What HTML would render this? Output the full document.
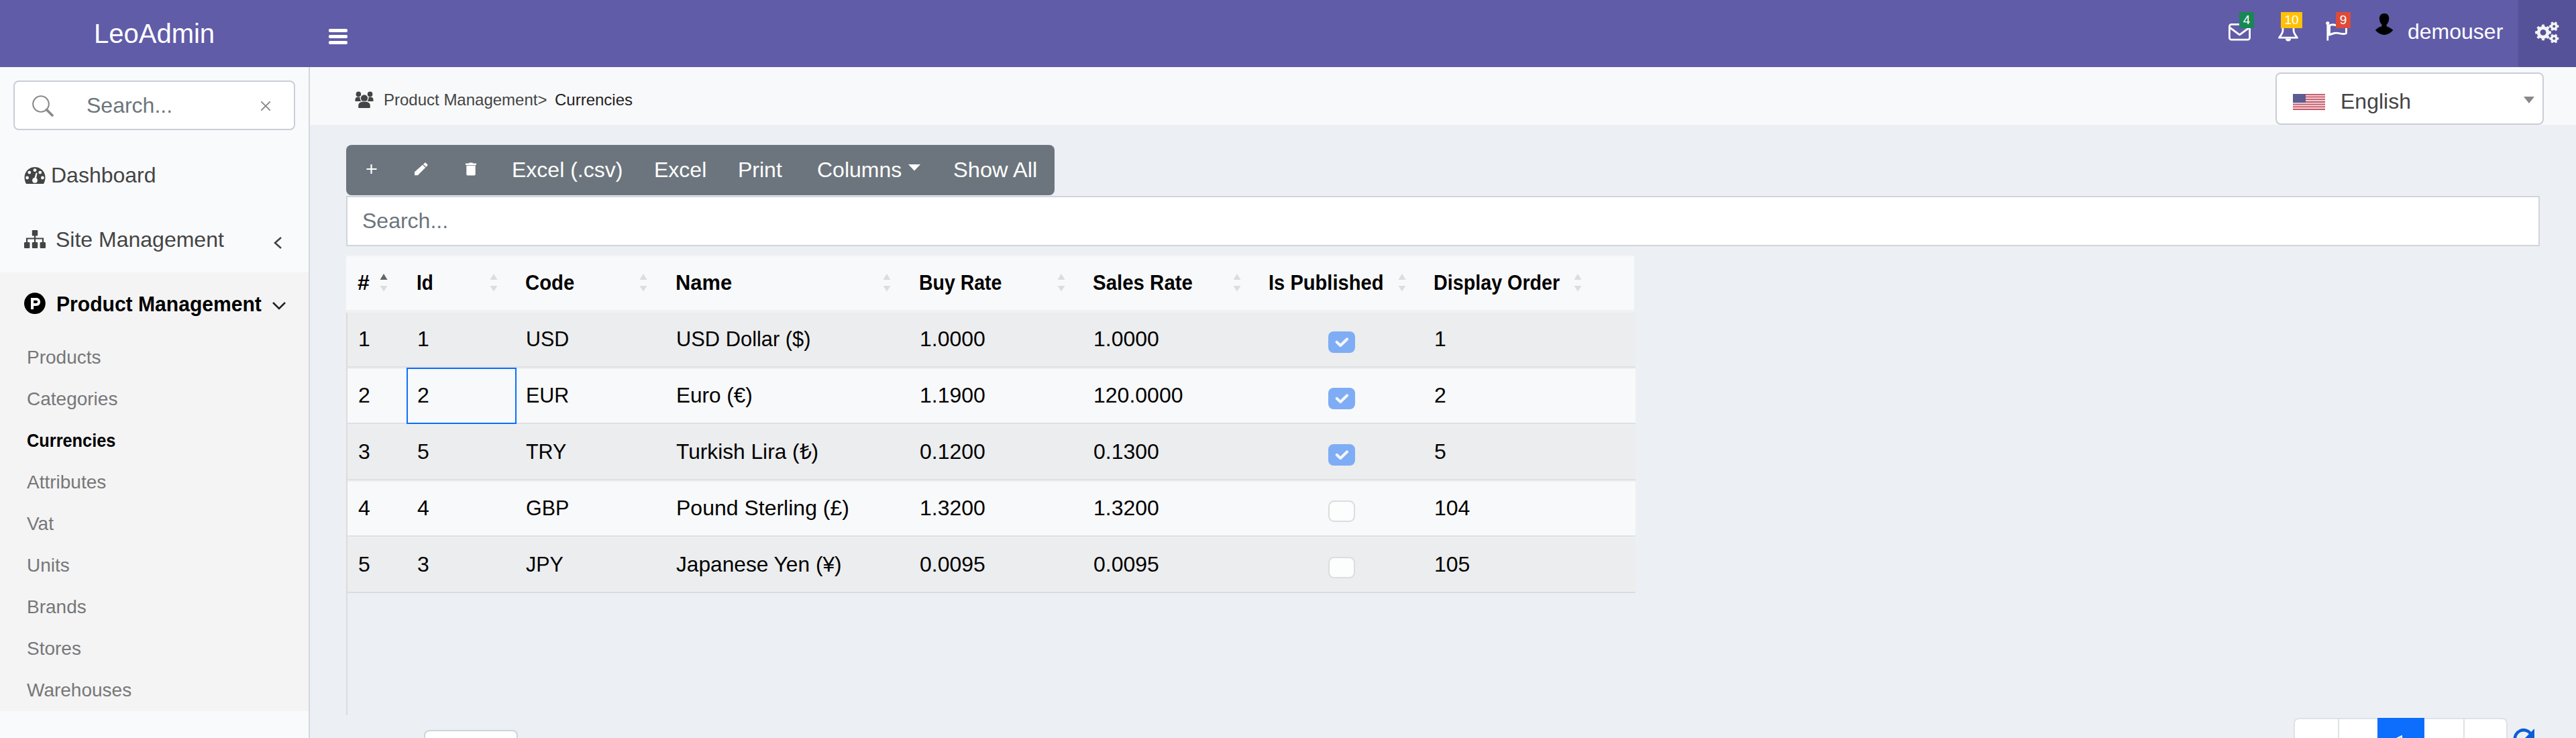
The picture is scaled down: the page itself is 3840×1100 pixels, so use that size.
<!DOCTYPE html>
<html><head><meta charset="utf-8"><title>LeoAdmin - Currencies</title>
<style>
html,body{margin:0;padding:0;width:3840px;height:1100px;overflow:hidden;background:#ecf0f5}
body{position:relative;font-family:"Liberation Sans",sans-serif}
.t{position:absolute;white-space:nowrap;line-height:1;}
.badge{position:absolute;height:24px;color:#fff;font-size:19px;line-height:24px;text-align:center;font-family:"Liberation Sans",sans-serif}
svg{display:block}
</style></head><body>
<div style="position:absolute;left:0;top:0;width:3840px;height:100px;background:#605ca8"></div>
<div style="position:absolute;left:3754px;top:0;width:86px;height:100px;background:#555299"></div>
<div class="t" style="left:140px;top:30.43px;font-size:40px;color:#fff;font-weight:400;">LeoAdmin</div>
<svg style="position:absolute;left:489px;top:42px" width="30" height="26" viewBox="0 0 30 26"><rect x="1" y="1" width="28" height="5" rx="2" fill="#fff"/><rect x="1" y="10" width="28" height="5" rx="2" fill="#fff"/><rect x="1" y="19" width="28" height="5" rx="2" fill="#fff"/></svg>
<svg style="position:absolute;left:3320px;top:33px" width="38" height="30" viewBox="0 0 38 30"><rect x="3.4" y="3.4" width="30.2" height="22.8" rx="3" fill="none" stroke="#fff" stroke-width="2.8"/><path d="M4.5 8.5 L18.5 18.8 L32.5 8.5" fill="none" stroke="#fff" stroke-width="2.8" stroke-linejoin="round"/></svg>
<div class="badge" style="left:3338px;top:18px;width:22px;background:#198754">4</div>
<svg style="position:absolute;left:3393px;top:28px" width="36" height="36" viewBox="0 0 36 36"><path d="M18 3 C11.5 3 10 9 10 14 L10 17 C10 21.5 7 24.5 4.5 28.2 L31.5 28.2 C29 24.5 26 21.5 26 17 L26 14 C26 9 24.5 3 18 3 Z" fill="none" stroke="#fff" stroke-width="2.8" stroke-linejoin="round"/><path d="M14 29.5 a4 4 0 0 0 8 0" fill="#fff"/></svg>
<div class="badge" style="left:3400px;top:18px;width:32px;background:#ffc107">10</div>
<svg style="position:absolute;left:3464px;top:30px" width="38" height="34" viewBox="0 0 38 34"><circle cx="5.8" cy="4.5" r="2.6" fill="#fff"/><line x1="5.8" y1="4.5" x2="5.8" y2="30.5" stroke="#fff" stroke-width="2.8"/><path d="M8.5 8 C14 4 20 10 26 8 C29.5 7 32 6 33.5 5.5 L33.5 19.5 C28 23 21.5 17.5 15.5 19.5 C12 20.5 10.5 21 8.5 22 Z" fill="none" stroke="#fff" stroke-width="2.9" stroke-linejoin="round"/></svg>
<div class="badge" style="left:3482px;top:18px;width:22px;background:#dd4b39">9</div>
<svg style="position:absolute;left:3540px;top:19px" width="28" height="34" viewBox="0 0 28 34"><path d="M14.1 0.9 C18.6 0.9 21.3 4 21.3 8.6 C21.3 12.6 19.6 16 17.6 17.8 L17.8 21.5 L10.4 21.5 L10.6 17.8 C8.6 16 6.9 12.6 6.9 8.6 C6.9 4 9.6 0.9 14.1 0.9 Z" fill="#000"/><path d="M0.8 26 C5 22 9.5 19.8 14.1 19.8 C18.7 19.8 23.2 22 27.4 26 C23 30.6 18.5 32.9 14.1 32.9 C9.7 32.9 5.2 30.6 0.8 26 Z" fill="#000"/></svg>
<div class="t" style="left:3589px;top:30.91px;font-size:32px;color:#fff;font-weight:400;">demouser</div>
<svg style="position:absolute;left:3776px;top:30px" width="44" height="38" viewBox="0 0 44 38"><polygon points="23.80,16.51 26.50,16.86 26.50,19.94 23.80,20.29 22.56,23.28 24.22,25.44 22.04,27.62 19.88,25.96 16.89,27.20 16.54,29.90 13.46,29.90 13.11,27.20 10.12,25.96 7.96,27.62 5.78,25.44 7.44,23.28 6.20,20.29 3.50,19.94 3.50,16.86 6.20,16.51 7.44,13.52 5.78,11.36 7.96,9.18 10.12,10.84 13.11,9.60 13.46,6.90 16.54,6.90 16.89,9.60 19.88,10.84 22.04,9.18 24.22,11.36 22.56,13.52" fill="#f4f4f4" stroke="#f4f4f4" stroke-width="0.8" stroke-linejoin="round"/><circle cx="15" cy="18.4" r="4.4" fill="#555299"/><polygon points="36.19,7.75 37.99,7.98 37.99,10.42 36.19,10.65 34.95,12.80 35.65,14.47 33.54,15.69 32.44,14.25 29.96,14.25 28.86,15.69 26.75,14.47 27.45,12.80 26.21,10.65 24.41,10.42 24.41,7.98 26.21,7.75 27.45,5.60 26.75,3.93 28.86,2.71 29.96,4.15 32.44,4.15 33.54,2.71 35.65,3.93 34.95,5.60" fill="#f4f4f4" stroke="#f4f4f4" stroke-width="0.8" stroke-linejoin="round"/><circle cx="31.2" cy="9.2" r="2.0" fill="#555299"/><polygon points="36.19,26.05 37.99,26.28 37.99,28.72 36.19,28.95 34.95,31.10 35.65,32.77 33.54,33.99 32.44,32.55 29.96,32.55 28.86,33.99 26.75,32.77 27.45,31.10 26.21,28.95 24.41,28.72 24.41,26.28 26.21,26.05 27.45,23.90 26.75,22.23 28.86,21.01 29.96,22.45 32.44,22.45 33.54,21.01 35.65,22.23 34.95,23.90" fill="#f4f4f4" stroke="#f4f4f4" stroke-width="0.8" stroke-linejoin="round"/><circle cx="31.2" cy="27.5" r="2.0" fill="#555299"/></svg>
<div style="position:absolute;left:0;top:100px;width:460px;height:1000px;background:#f9fafc"></div>
<div style="position:absolute;left:0;top:406px;width:460px;height:654px;background:#f4f4f5"></div>
<div style="position:absolute;left:460px;top:100px;width:2px;height:1000px;background:#d2d6de"></div>
<div style="position:absolute;left:20px;top:120px;width:416px;height:70px;border:2px solid #c9ced6;border-radius:8px;background:#fff"></div>
<svg style="position:absolute;left:46px;top:140px" width="36" height="36" viewBox="0 0 36 36"><circle cx="15" cy="15" r="11.8" fill="none" stroke="#8a8a8a" stroke-width="2.1"/><line x1="23.5" y1="23.5" x2="32" y2="32" stroke="#8a8a8a" stroke-width="3.8" stroke-linecap="round"/></svg>
<div class="t" style="left:129px;top:140.71px;font-size:32px;color:#6c757d;font-weight:400;">Search...</div>
<svg style="position:absolute;left:387px;top:149px" width="18" height="18" viewBox="0 0 18 18"><path d="M2.3 2.3 L15.7 15.7 M15.7 2.3 L2.3 15.7" stroke="#888" stroke-width="1.9"/></svg>
<svg style="position:absolute;left:36px;top:248px" width="32" height="27" viewBox="0 0 32 27"><path d="M16 1 C7.4 1 0.5 7.9 0.5 16.5 C0.5 20 1.5 23.2 3 26 L29 26 C30.5 23.2 31.5 20 31.5 16.5 C31.5 7.9 24.6 1 16 1 Z" fill="#444"/><circle cx="16" cy="5.6" r="2.4" fill="#f9fafc"/><circle cx="7.8" cy="9.1" r="2.4" fill="#f9fafc"/><circle cx="23.8" cy="9.1" r="2.4" fill="#f9fafc"/><circle cx="4.6" cy="17" r="2.4" fill="#f9fafc"/><circle cx="27.4" cy="17" r="2.4" fill="#f9fafc"/><circle cx="16" cy="20.8" r="3.9" fill="#f9fafc"/><path d="M14.6 20 L17.6 9.6 L19.6 10.1 L17.6 20.5 Z" fill="#f9fafc"/></svg>
<div class="t" style="left:76px;top:244.91px;font-size:32px;color:#444;font-weight:400;">Dashboard</div>
<svg style="position:absolute;left:36px;top:342px" width="32" height="29" viewBox="0 0 32 29"><rect x="11.8" y="1" width="8.4" height="8.6" rx="1.2" fill="#444"/><path d="M16 9 V13.5 M4 19 V13.5 H28 V19 M16 13.5 V19" stroke="#444" stroke-width="2.2" fill="none"/><rect x="0" y="19" width="8.4" height="9" rx="1.2" fill="#444"/><rect x="11.8" y="19" width="8.4" height="9" rx="1.2" fill="#444"/><rect x="23.6" y="19" width="8.4" height="9" rx="1.2" fill="#444"/></svg>
<div class="t" style="left:83px;top:340.91px;font-size:32px;color:#444;font-weight:400;">Site Management</div>
<svg style="position:absolute;left:406px;top:352px" width="16" height="20" viewBox="0 0 16 20"><path d="M13 2 L4 10 L13 18" fill="none" stroke="#444" stroke-width="2.6"/></svg>
<svg style="position:absolute;left:36px;top:436px" width="33" height="33" viewBox="0 0 33 33"><circle cx="15.9" cy="16.2" r="15.9" fill="#000"/><path d="M10 7.9 H18 C21.8 7.9 24 10.4 24 14 C24 17.6 21.8 19.9 18 19.9 H14.1 V25 H10 Z M14.1 11.7 V16 H17.8 C19.3 16 20.2 15.2 20.2 13.85 C20.2 12.5 19.3 11.7 17.8 11.7 Z" fill="#fff"/></svg>
<div class="t" style="left:84px;top:436.91px;font-size:32px;color:#000;font-weight:700;transform:scaleX(0.94);transform-origin:0 0;">Product Management</div>
<svg style="position:absolute;left:405px;top:448px" width="22" height="16" viewBox="0 0 22 16"><path d="M2 3 L11 12 L20 3" fill="none" stroke="#222" stroke-width="2.6"/></svg>
<div class="t" style="left:40px;top:518.79px;font-size:28px;color:#777;font-weight:400;">Products</div>
<div class="t" style="left:40px;top:580.79px;font-size:28px;color:#777;font-weight:400;">Categories</div>
<div class="t" style="left:40px;top:642.79px;font-size:28px;color:#000;font-weight:700;transform:scaleX(0.905);transform-origin:0 0;">Currencies</div>
<div class="t" style="left:40px;top:704.79px;font-size:28px;color:#777;font-weight:400;">Attributes</div>
<div class="t" style="left:40px;top:766.79px;font-size:28px;color:#777;font-weight:400;">Vat</div>
<div class="t" style="left:40px;top:828.79px;font-size:28px;color:#777;font-weight:400;">Units</div>
<div class="t" style="left:40px;top:890.79px;font-size:28px;color:#777;font-weight:400;">Brands</div>
<div class="t" style="left:40px;top:952.79px;font-size:28px;color:#777;font-weight:400;">Stores</div>
<div class="t" style="left:40px;top:1014.79px;font-size:28px;color:#777;font-weight:400;">Warehouses</div>
<div style="position:absolute;left:462px;top:100px;width:3378px;height:1000px;background:#ecf0f5"></div>
<div style="position:absolute;left:462px;top:100px;width:3378px;height:86px;background:#f8f9fa"></div>
<svg style="position:absolute;left:529px;top:136px" width="28" height="26" viewBox="0 0 28 26"><circle cx="5.4" cy="4.4" r="3.8" fill="#444"/><circle cx="22.6" cy="4.4" r="3.8" fill="#444"/><path d="M0.5 15 V12.5 C0.5 9.8 2.3 8.6 5 8.6 C7.7 8.6 9.5 9.8 9.5 12.5 V15 Z" fill="#444"/><path d="M18.5 15 V12.5 C18.5 9.8 20.3 8.6 23 8.6 C25.7 8.6 27.5 9.8 27.5 12.5 V15 Z" fill="#444"/><circle cx="14" cy="10.3" r="5.8" fill="#444" stroke="#f8f9fa" stroke-width="1.3"/><path d="M4.6 24 V21.5 C4.6 17.3 8.2 15 14 15 C19.8 15 23.4 17.3 23.4 21.5 V24 Q23.4 25.5 21.9 25.5 H6.1 Q4.6 25.5 4.6 24 Z" fill="#444" stroke="#f8f9fa" stroke-width="1.2"/></svg>
<div class="t" style="left:572px;top:137.28px;font-size:24px;color:#444;font-weight:400;">Product Management&gt;</div>
<div class="t" style="left:827px;top:137.28px;font-size:24px;color:#222;font-weight:400;">Currencies</div>
<div style="position:absolute;left:3392px;top:108px;width:396px;height:74px;border:2px solid #c9ced6;border-radius:8px;background:#fff"></div>
<svg style="position:absolute;left:3418px;top:140px" width="48" height="24" viewBox="0 0 48 24"><rect x="0" y="0.000" width="48" height="1.846" fill="#c54b5c"/><rect x="0" y="1.846" width="48" height="1.846" fill="#ecd3d8"/><rect x="0" y="3.692" width="48" height="1.846" fill="#c54b5c"/><rect x="0" y="5.538" width="48" height="1.846" fill="#ecd3d8"/><rect x="0" y="7.385" width="48" height="1.846" fill="#c54b5c"/><rect x="0" y="9.231" width="48" height="1.846" fill="#ecd3d8"/><rect x="0" y="11.077" width="48" height="1.846" fill="#c54b5c"/><rect x="0" y="12.923" width="48" height="1.846" fill="#ecd3d8"/><rect x="0" y="14.769" width="48" height="1.846" fill="#c54b5c"/><rect x="0" y="16.615" width="48" height="1.846" fill="#ecd3d8"/><rect x="0" y="18.462" width="48" height="1.846" fill="#c54b5c"/><rect x="0" y="20.308" width="48" height="1.846" fill="#ecd3d8"/><rect x="0" y="22.154" width="48" height="1.846" fill="#c54b5c"/><rect x="0" y="0" width="19" height="13" fill="#5b5c8f"/></svg>
<div class="t" style="left:3489px;top:134.91px;font-size:32px;color:#444;font-weight:400;">English</div>
<svg style="position:absolute;left:3762px;top:144px" width="16" height="10" viewBox="0 0 16 10"><path d="M0 0 H16 L8 10 Z" fill="#888"/></svg>
<div style="position:absolute;left:516px;top:216px;width:1056px;height:75px;background:#6c757d;border-radius:8px"></div>
<svg style="position:absolute;left:546px;top:244px" width="16" height="16" viewBox="0 0 16 16"><path d="M7.5 1 V15 M0.5 8 H15.5" stroke="#fff" stroke-width="2.2"/></svg>
<svg style="position:absolute;left:617px;top:242px" width="21" height="20" viewBox="0 0 21 20"><path d="M16 1 C16.6 0.4 17.4 0.4 18 1 L20 3 C20.6 3.6 20.6 4.4 20 5 L7 18 L6 19.3 H1 V14.3 Z" fill="#fff"/><path d="M13.5 3.2 L17.8 7.5" stroke="#6c757d" stroke-width="1.3"/></svg>
<svg style="position:absolute;left:694px;top:242px" width="16" height="20" viewBox="0 0 16 20"><path d="M0 1.6 H5 L5.6 0.6 H10.4 L11 1.6 H16 V4 H0 Z" fill="#fff"/><path d="M1.3 4.8 H14.7 V17.8 C14.7 18.8 14 19.4 13 19.4 H3 C2 19.4 1.3 18.8 1.3 17.8 Z" fill="#fff"/></svg>
<div class="t" style="left:763px;top:237.11px;font-size:32px;color:#fff;font-weight:400;">Excel (.csv)</div>
<div class="t" style="left:975px;top:237.11px;font-size:32px;color:#fff;font-weight:400;">Excel</div>
<div class="t" style="left:1100px;top:237.11px;font-size:32px;color:#fff;font-weight:400;">Print</div>
<div class="t" style="left:1218px;top:237.11px;font-size:32px;color:#fff;font-weight:400;">Columns</div>
<svg style="position:absolute;left:1354px;top:245px" width="18" height="10" viewBox="0 0 18 10"><path d="M0 0 H18 L9 9.5 Z" fill="#fff"/></svg>
<div class="t" style="left:1421px;top:237.11px;font-size:32px;color:#fff;font-weight:400;transform:scaleX(1.02);transform-origin:0 0;">Show All</div>
<div style="position:absolute;left:516px;top:292px;width:3266px;height:71px;border:2px solid #d0d4db;background:#fff"></div>
<div class="t" style="left:540px;top:313.21px;font-size:32px;color:#6c757d;font-weight:400;">Search...</div>
<div style="position:absolute;left:516px;top:380px;width:1920px;height:86px;background:#f8f9fa"></div>
<div style="position:absolute;left:516px;top:380px;width:1920px;height:2px;background:#f1f2f3"></div>
<div style="position:absolute;left:516px;top:462px;width:1920px;height:4px;background:#f1f1f1"></div>
<div class="t" style="left:533px;top:405.41px;font-size:32px;color:#000;font-weight:700;transform:scaleX(1.0);transform-origin:0 0;">#</div>
<svg style="position:absolute;left:566px;top:407px" width="12" height="28" viewBox="0 0 12 28"><path d="M0.5 10 L6 1 L11.5 10 Z" fill="#666"/><path d="M0.5 19 L11.5 19 L6 27.5 Z" fill="#ddd"/></svg>
<div class="t" style="left:621px;top:405.41px;font-size:32px;color:#000;font-weight:700;transform:scaleX(0.87);transform-origin:0 0;">Id</div>
<svg style="position:absolute;left:730px;top:407px" width="12" height="28" viewBox="0 0 12 28"><path d="M0.5 10 L6 1 L11.5 10 Z" fill="#ddd"/><path d="M0.5 19 L11.5 19 L6 27.5 Z" fill="#ddd"/></svg>
<div class="t" style="left:783px;top:405.41px;font-size:32px;color:#000;font-weight:700;transform:scaleX(0.915);transform-origin:0 0;">Code</div>
<svg style="position:absolute;left:953px;top:407px" width="12" height="28" viewBox="0 0 12 28"><path d="M0.5 10 L6 1 L11.5 10 Z" fill="#ddd"/><path d="M0.5 19 L11.5 19 L6 27.5 Z" fill="#ddd"/></svg>
<div class="t" style="left:1007px;top:405.41px;font-size:32px;color:#000;font-weight:700;transform:scaleX(0.965);transform-origin:0 0;">Name</div>
<svg style="position:absolute;left:1316px;top:407px" width="12" height="28" viewBox="0 0 12 28"><path d="M0.5 10 L6 1 L11.5 10 Z" fill="#ddd"/><path d="M0.5 19 L11.5 19 L6 27.5 Z" fill="#ddd"/></svg>
<div class="t" style="left:1370px;top:405.41px;font-size:32px;color:#000;font-weight:700;transform:scaleX(0.89);transform-origin:0 0;">Buy Rate</div>
<svg style="position:absolute;left:1576px;top:407px" width="12" height="28" viewBox="0 0 12 28"><path d="M0.5 10 L6 1 L11.5 10 Z" fill="#ddd"/><path d="M0.5 19 L11.5 19 L6 27.5 Z" fill="#ddd"/></svg>
<div class="t" style="left:1629px;top:405.41px;font-size:32px;color:#000;font-weight:700;transform:scaleX(0.92);transform-origin:0 0;">Sales Rate</div>
<svg style="position:absolute;left:1838px;top:407px" width="12" height="28" viewBox="0 0 12 28"><path d="M0.5 10 L6 1 L11.5 10 Z" fill="#ddd"/><path d="M0.5 19 L11.5 19 L6 27.5 Z" fill="#ddd"/></svg>
<div class="t" style="left:1891px;top:405.41px;font-size:32px;color:#000;font-weight:700;transform:scaleX(0.91);transform-origin:0 0;">Is Published</div>
<svg style="position:absolute;left:2084px;top:407px" width="12" height="28" viewBox="0 0 12 28"><path d="M0.5 10 L6 1 L11.5 10 Z" fill="#ddd"/><path d="M0.5 19 L11.5 19 L6 27.5 Z" fill="#ddd"/></svg>
<div class="t" style="left:2137px;top:405.41px;font-size:32px;color:#000;font-weight:700;transform:scaleX(0.897);transform-origin:0 0;">Display Order</div>
<svg style="position:absolute;left:2346px;top:407px" width="12" height="28" viewBox="0 0 12 28"><path d="M0.5 10 L6 1 L11.5 10 Z" fill="#ddd"/><path d="M0.5 19 L11.5 19 L6 27.5 Z" fill="#ddd"/></svg>
<div style="position:absolute;left:516px;top:466px;width:2px;height:600px;background:#dcdcdc"></div>
<div style="position:absolute;left:518px;top:466px;width:1920px;height:80px;background:#ecedee"></div>
<div style="position:absolute;left:518px;top:546px;width:1920px;height:2px;background:#dfe0e1"></div>
<div class="t" style="left:534px;top:488.51px;font-size:32px;color:#000;font-weight:400;">1</div>
<div class="t" style="left:622px;top:488.51px;font-size:32px;color:#000;font-weight:400;">1</div>
<div class="t" style="left:784px;top:488.51px;font-size:32px;color:#000;font-weight:400;transform:scaleX(0.95);transform-origin:0 0;">USD</div>
<div class="t" style="left:1008px;top:488.51px;font-size:32px;color:#000;font-weight:400;transform:scaleX(0.964);transform-origin:0 0;">USD Dollar ($)</div>
<div class="t" style="left:1371px;top:488.51px;font-size:32px;color:#000;font-weight:400;">1.0000</div>
<div class="t" style="left:1630px;top:488.51px;font-size:32px;color:#000;font-weight:400;">1.0000</div>
<svg style="position:absolute;left:1980px;top:494px" width="40" height="32" viewBox="0 0 40 32"><rect x="0" y="0" width="40" height="32" rx="8" fill="#7fadf5"/><path d="M12.8 16 L18.2 21 L28 11.5" fill="none" stroke="#f4f6f8" stroke-width="4.2" stroke-linecap="round" stroke-linejoin="round"/></svg>
<div class="t" style="left:2138px;top:488.51px;font-size:32px;color:#000;font-weight:400;">1</div>
<div style="position:absolute;left:518px;top:550px;width:1920px;height:80px;background:#f8f9fa"></div>
<div style="position:absolute;left:518px;top:630px;width:1920px;height:2px;background:#dfe0e1"></div>
<div class="t" style="left:534px;top:572.51px;font-size:32px;color:#000;font-weight:400;">2</div>
<div class="t" style="left:622px;top:572.51px;font-size:32px;color:#000;font-weight:400;">2</div>
<div class="t" style="left:784px;top:572.51px;font-size:32px;color:#000;font-weight:400;transform:scaleX(0.95);transform-origin:0 0;">EUR</div>
<div class="t" style="left:1008px;top:572.51px;font-size:32px;color:#000;font-weight:400;transform:scaleX(0.985);transform-origin:0 0;">Euro (€)</div>
<div class="t" style="left:1371px;top:572.51px;font-size:32px;color:#000;font-weight:400;">1.1900</div>
<div class="t" style="left:1630px;top:572.51px;font-size:32px;color:#000;font-weight:400;">120.0000</div>
<svg style="position:absolute;left:1980px;top:578px" width="40" height="32" viewBox="0 0 40 32"><rect x="0" y="0" width="40" height="32" rx="8" fill="#7fadf5"/><path d="M12.8 16 L18.2 21 L28 11.5" fill="none" stroke="#f4f6f8" stroke-width="4.2" stroke-linecap="round" stroke-linejoin="round"/></svg>
<div class="t" style="left:2138px;top:572.51px;font-size:32px;color:#000;font-weight:400;">2</div>
<div style="position:absolute;left:518px;top:634px;width:1920px;height:80px;background:#ecedee"></div>
<div style="position:absolute;left:518px;top:714px;width:1920px;height:2px;background:#dfe0e1"></div>
<div class="t" style="left:534px;top:656.51px;font-size:32px;color:#000;font-weight:400;">3</div>
<div class="t" style="left:622px;top:656.51px;font-size:32px;color:#000;font-weight:400;">5</div>
<div class="t" style="left:784px;top:656.51px;font-size:32px;color:#000;font-weight:400;transform:scaleX(0.95);transform-origin:0 0;">TRY</div>
<div class="t" style="left:1008px;top:656.51px;font-size:32px;color:#000;font-weight:400;transform:scaleX(0.99);transform-origin:0 0;">Turkish Lira (₺)</div>
<div class="t" style="left:1371px;top:656.51px;font-size:32px;color:#000;font-weight:400;">0.1200</div>
<div class="t" style="left:1630px;top:656.51px;font-size:32px;color:#000;font-weight:400;">0.1300</div>
<svg style="position:absolute;left:1980px;top:662px" width="40" height="32" viewBox="0 0 40 32"><rect x="0" y="0" width="40" height="32" rx="8" fill="#7fadf5"/><path d="M12.8 16 L18.2 21 L28 11.5" fill="none" stroke="#f4f6f8" stroke-width="4.2" stroke-linecap="round" stroke-linejoin="round"/></svg>
<div class="t" style="left:2138px;top:656.51px;font-size:32px;color:#000;font-weight:400;">5</div>
<div style="position:absolute;left:518px;top:718px;width:1920px;height:80px;background:#f8f9fa"></div>
<div style="position:absolute;left:518px;top:798px;width:1920px;height:2px;background:#dfe0e1"></div>
<div class="t" style="left:534px;top:740.51px;font-size:32px;color:#000;font-weight:400;">4</div>
<div class="t" style="left:622px;top:740.51px;font-size:32px;color:#000;font-weight:400;">4</div>
<div class="t" style="left:784px;top:740.51px;font-size:32px;color:#000;font-weight:400;transform:scaleX(0.95);transform-origin:0 0;">GBP</div>
<div class="t" style="left:1008px;top:740.51px;font-size:32px;color:#000;font-weight:400;transform:scaleX(1.0);transform-origin:0 0;">Pound Sterling (£)</div>
<div class="t" style="left:1371px;top:740.51px;font-size:32px;color:#000;font-weight:400;">1.3200</div>
<div class="t" style="left:1630px;top:740.51px;font-size:32px;color:#000;font-weight:400;">1.3200</div>
<svg style="position:absolute;left:1980px;top:746px" width="40" height="32" viewBox="0 0 40 32"><rect x="1" y="1" width="38" height="30" rx="7.5" fill="#fcfdfd" stroke="#dcdedd" stroke-width="2"/></svg>
<div class="t" style="left:2138px;top:740.51px;font-size:32px;color:#000;font-weight:400;">104</div>
<div style="position:absolute;left:518px;top:802px;width:1920px;height:80px;background:#ecedee"></div>
<div style="position:absolute;left:518px;top:882px;width:1920px;height:2px;background:#dfe0e1"></div>
<div class="t" style="left:534px;top:824.51px;font-size:32px;color:#000;font-weight:400;">5</div>
<div class="t" style="left:622px;top:824.51px;font-size:32px;color:#000;font-weight:400;">3</div>
<div class="t" style="left:784px;top:824.51px;font-size:32px;color:#000;font-weight:400;transform:scaleX(0.95);transform-origin:0 0;">JPY</div>
<div class="t" style="left:1008px;top:824.51px;font-size:32px;color:#000;font-weight:400;transform:scaleX(0.99);transform-origin:0 0;">Japanese Yen (¥)</div>
<div class="t" style="left:1371px;top:824.51px;font-size:32px;color:#000;font-weight:400;">0.0095</div>
<div class="t" style="left:1630px;top:824.51px;font-size:32px;color:#000;font-weight:400;">0.0095</div>
<svg style="position:absolute;left:1980px;top:830px" width="40" height="32" viewBox="0 0 40 32"><rect x="1" y="1" width="38" height="30" rx="7.5" fill="#fcfdfd" stroke="#dcdedd" stroke-width="2"/></svg>
<div class="t" style="left:2138px;top:824.51px;font-size:32px;color:#000;font-weight:400;">105</div>
<div style="position:absolute;left:606px;top:548px;width:160px;height:80px;border:2px solid #0d6efd"></div>
<div style="position:absolute;left:518px;top:882px;width:1920px;height:2px;background:#dcdcdc"></div>
<div style="position:absolute;left:632px;top:1088px;width:136px;height:40px;border:2px solid #ced4da;border-radius:8px;background:#fff"></div>
<div style="position:absolute;left:3419px;top:1070px;width:315px;height:60px;border:2px solid #dee2e6;border-radius:8px;background:#fff;overflow:hidden"><div style="position:absolute;left:64px;top:0;width:2px;height:60px;background:#dee2e6"></div><div style="position:absolute;left:251px;top:0;width:2px;height:60px;background:#dee2e6"></div></div>
<div style="position:absolute;left:3544px;top:1070px;width:70px;height:40px;background:#0d6efd"></div>
<svg style="position:absolute;left:3744px;top:1083px" width="36" height="20" viewBox="0 0 36 20"><path d="M5 20 A 13 13 0 0 1 28 10" fill="none" stroke="#0b5ed7" stroke-width="4.5"/><path d="M34 3 L34 20 L20 17 Z" fill="#0b5ed7"/></svg>
<svg style="position:absolute;left:3571px;top:1095px" width="12" height="8" viewBox="0 0 12 8"><path d="M1 5 L9 1 L10 1 L10 8 L8 8 L8 4 L2 7 Z" fill="#fff"/></svg>
</body></html>
